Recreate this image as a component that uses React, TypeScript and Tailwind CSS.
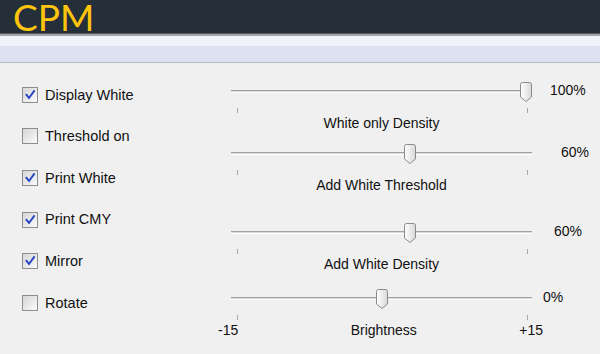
const options = [
  { label: 'Display White', checked: true },
  { label: 'Threshold on', checked: false },
  { label: 'Print White', checked: true },
  { label: 'Print CMY', checked: true },
  { label: 'Mirror', checked: true },
  { label: 'Rotate', checked: false },
]

function CheckBox({ checked }: { checked: boolean }) {
  return (
    <span className="relative w-[16px] h-[16px] shrink-0 border border-[#8c8d8e] bg-gradient-to-br from-[#d6d6d6] to-[#fbfbfb]">
      {checked && (
        <svg viewBox="0 0 14 14" className="absolute inset-0 w-[14px] h-[14px]">
          <path d="M3.5 7 L6 10 L11 3.2" fill="none" stroke="#2a47c4" strokeWidth="2" strokeLinecap="square" />
        </svg>
      )}
    </span>
  )
}

function Thumb({ center }: { center: number }) {
  return (
    <svg
      viewBox="0 0 12 20"
      className="absolute top-[1px] w-[12px] h-[20px]"
      style={{ left: center - 6 }}
    >
      <defs>
        <linearGradient id="thumbg" x1="0" y1="0" x2="1" y2="0">
          <stop offset="0" stopColor="#ffffff" />
          <stop offset="1" stopColor="#d9d9d9" />
        </linearGradient>
      </defs>
      <path
        d="M2.5 0.5 H9.5 Q11.5 0.5 11.5 2.5 V15 L6 19.5 L0.5 15 V2.5 Q0.5 0.5 2.5 0.5 Z"
        fill="url(#thumbg)"
        stroke="#8a8a8a"
      />
    </svg>
  )
}

interface SliderProps {
  thumb: number
  value: string
  valueLeft: number
  label: string
  range?: boolean
  className?: string
}

function Slider({ thumb, value, valueLeft, label, range, className }: SliderProps) {
  return (
    <div className={`flex flex-col ${className ?? ''}`}>
      {/* Track + value */}
      <div className="flex items-center h-[20px]">
        <div className="relative ml-[13px] w-[301px] h-[20px] flex items-center">
          <div className="w-full h-[3px] border-t border-[#a2a2a2] bg-[#d9d9d9] border-b border-b-white" />
          <Thumb center={thumb} />
        </div>
        <span className="text-[14px] leading-none -translate-y-[1px]" style={{ marginLeft: valueLeft }}>{value}</span>
      </div>

      {/* Ticks */}
      <div className="relative h-[14px]">
        <div className="flex justify-between ml-[19px] w-[291px] mt-[7px]">
          <span className="w-px h-[5px] bg-[#a8a8a8]" />
          <span className="w-px h-[5px] bg-[#a8a8a8]" />
        </div>
      </div>

      {/* Label */}
      {range ? (
        <div className="flex items-center h-[16px] w-[325px] text-[14px] leading-none">
          <span>-15</span>
          <span className="flex-1 text-center pl-[10px]">{label}</span>
          <span>+15</span>
        </div>
      ) : (
        <div className="ml-[13px] w-[301px] h-[16px] flex items-center justify-center text-[14px] leading-none">
          {label}
        </div>
      )}
    </div>
  )
}

export default function App() {
  return (
    <div className="w-[600px] h-[354px] overflow-hidden bg-[#f0f0f0] text-[#111] font-['Liberation_Sans',Arial,sans-serif]">
      {/* Header */}
      <div className="h-[33px] bg-[#252f3a] pl-[13px]">
        <span className="font-['Lato',sans-serif] text-[37px] leading-[33px] text-[#ffc40c]">CPM</span>
      </div>
      <div className="h-px bg-[#55595e]" />
      <div className="h-[2px] bg-[#a3a6ab]" />
      <div className="h-[10px] bg-[#f1f3fa]" />
      <div className="h-[16px] bg-[#dde1f0]" />
      <div className="h-px bg-[#b7bbca]" />

      {/* Body */}
      <div className="flex">
        <div className="w-[218px] pt-[11px] pl-[22px]">
          {options.map((o) => (
            <div key={o.label} className="flex items-center gap-[7px] h-[41.6px]">
              <CheckBox checked={o.checked} />
              <span className="text-[14.5px] leading-none">{o.label}</span>
            </div>
          ))}
        </div>

        <div className="flex flex-col pt-[18px]">
          <Slider thumb={295} value="100%" valueLeft={18} label="White only Density" />
          <Slider thumb={179} value="60%" valueLeft={29} label="Add White Threshold" className="mt-[12px]" />
          <Slider thumb={179} value="60%" valueLeft={22} label="Add White Density" className="mt-[29px]" />
          <Slider thumb={151} value="0%" valueLeft={11} label="Brightness" range className="mt-[16px]" />
        </div>
      </div>
    </div>
  )
}
